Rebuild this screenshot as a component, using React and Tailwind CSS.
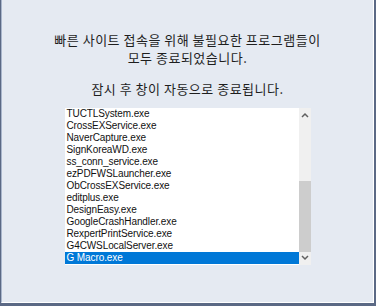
import React from "react"

const processes = [
  "TUCTLSystem.exe",
  "CrossEXService.exe",
  "NaverCapture.exe",
  "SignKoreaWD.exe",
  "ss_conn_service.exe",
  "ezPDFWSLauncher.exe",
  "ObCrossEXService.exe",
  "editplus.exe",
  "DesignEasy.exe",
  "GoogleCrashHandler.exe",
  "RexpertPrintService.exe",
  "G4CWSLocalServer.exe",
  "G Macro.exe",
]

export default function App() {
  return (
    <div className="w-[376px] h-[306px] bg-[#5b6985] pl-px pr-[2px] pb-[3px]">
      <div className="h-full bg-[#e5eaf2] border-l border-[#a9b6cc] border-r border-b border-r-white border-b-white flex flex-col items-center">
        <div
          className="mt-[31px] text-[13px] leading-[18px] text-[#1e1e1e] text-center tracking-[0.5px]"
          style={{ fontFamily: '"Noto Sans CJK KR", sans-serif' }}
        >
          <p>빠른 사이트 접속을 위해 불필요한 프로그램들이</p>
          <p>모두 종료되었습니다.</p>
          <p className="mt-[13px]">잠시 후 창이 자동으로 종료됩니다.</p>
        </div>

        <div className="mt-[10px] flex w-[246px] h-[157px]" style={{ fontFamily: '"Liberation Sans", Arial, sans-serif' }}>
          <ul className="flex-1 bg-white text-[10px] leading-[12px] tracking-[-0.1px] text-[#111111]">
            {processes.map((name, i) => (
              <li
                key={name}
                className={
                  "h-[12px] pl-[2px] whitespace-nowrap " +
                  (i === processes.length - 1 ? "bg-[#0078d7] text-white" : "")
                }
              >
                {name}
              </li>
            ))}
          </ul>
          <div className="w-[12px] bg-[#f0f0f0] flex flex-col items-center">
            <svg className="mt-[4px]" width="8" height="6" viewBox="0 0 8 6">
              <path d="M1 5 L4 2 L7 5" fill="none" stroke="#606060" strokeWidth="1.5" />
            </svg>
            <div className="mt-[63px] w-[12px] h-[71px] bg-[#cdcdcd]" />
            <svg className="mt-[3px]" width="8" height="6" viewBox="0 0 8 6">
              <path d="M1 1 L4 4 L7 1" fill="none" stroke="#606060" strokeWidth="1.5" />
            </svg>
          </div>
        </div>
      </div>
    </div>
  )
}
